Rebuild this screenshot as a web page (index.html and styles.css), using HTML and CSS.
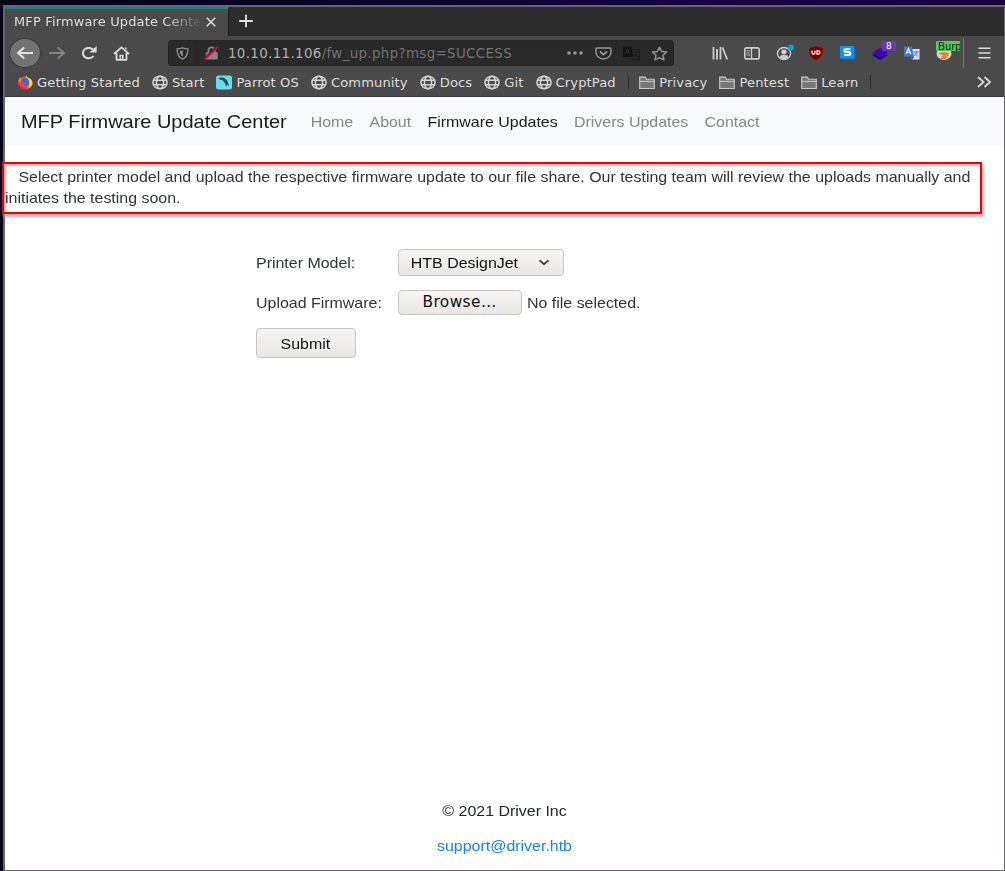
FILE: index.html
```html
<!DOCTYPE html>
<html lang="en">
<head>
<meta charset="utf-8">
<title>MFP Firmware Update Center</title>
<link rel="stylesheet" href="styles.css">
</head>
<body>
<svg class="defs" width="0" height="0">
  <symbol id="globe" viewBox="0 0 16 16"><g fill="none" stroke="#d4d4d4" stroke-width="1.5"><ellipse cx="8" cy="8.500" rx="7.1" ry="6.300"/><ellipse cx="8" cy="8.500" rx="3.600" ry="6.300"/><path d="M1.500 6.300h13M1.500 10.700h13"/></g></symbol>
  <symbol id="folder" viewBox="0 0 16 16"><path d="M.7 14.500V3.100h5.500l1.400 2.200h7.700v9.200z" fill="#777" stroke="#c8c8c8" stroke-width="1.1"/><path d="M1 7.400h14" stroke="#c8c8c8"/></symbol>
</svg>
<div class="window">
  <div class="tabs">
    <div class="tab"><span class="tab-title">MFP Firmware Update Center</span>
      <svg width="10" height="10" viewBox="0 0 10 10"><path d="M.8.8l8.4 8.4M9.2.8L.8 9.2" stroke="#ddd" stroke-width="1.6"/></svg>
    </div>
    <svg class="newtab" width="14" height="14" viewBox="0 0 14 14"><path d="M7 .7v12.6M.3 7h13.4" stroke="#e4e4e4" stroke-width="1.8"/></svg>
  </div>

  <div class="toolbar">
    <div class="cell back"><svg width="18" height="14" viewBox="0 0 18 14"><path d="M17 7H2M8.3 1.4L2 7l6.300 5.600" fill="none" stroke="#e4e4e4" stroke-width="2"/></svg></div>
    <div class="cell"><svg width="18" height="14" viewBox="0 0 18 14"><path d="M1 7h15M9.700 1.400L16 7l-6.300 5.600" fill="none" stroke="#858585" stroke-width="1.800"/></svg></div>
    <div class="cell"><svg width="16" height="14" viewBox="0 0 16 14"><path d="M12.700 4.500A5.800 5.200 0 1 0 12.500 10" fill="none" stroke="#dcdcdc" stroke-width="2"/><path d="M15.600 0v6.600H8.500z" fill="#dcdcdc"/></svg></div>
    <div class="cell"><svg width="17" height="15" viewBox="0 0 17 15"><path d="M1 8l7.500-6.700L16 8M3.500 7v6.800h10V7" fill="none" stroke="#dcdcdc" stroke-width="1.800" stroke-linejoin="round"/><path d="M11.500 1.500h2v3z" fill="#dcdcdc"/><path d="M7.200 13V9.500h2.600V13" fill="none" stroke="#dcdcdc" stroke-width="1.500"/></svg></div>

    <div class="urlbar">
      <div class="ucell shield"><svg width="13" height="13" viewBox="0 0 13 13"><path d="M6.500.8c1.800.8 3.500 1 5.400 1.100 0 5.300-1.100 8.300-5.400 10.300C2.200 10.200 1.100 7.200 1.100 1.900 3 1.800 4.700 1.600 6.500.8z" fill="none" stroke="#8b8b8b" stroke-width="1.400"/><path d="M6.900 3.400v6.200C4.700 8.300 3.900 6.700 3.900 4z" fill="#8b8b8b"/></svg></div>
      <div class="ucell"><svg width="15" height="14" viewBox="0 0 15 14"><path d="M4.500 7V4.300a3.200 3 0 0 1 6.400 0V7" fill="none" stroke="#858585" stroke-width="1.800"/><rect x="1.800" y="6.200" width="12" height="7.300" rx="1" fill="#858585"/><path d="M.5 12.600L13.700.2" stroke="#292929" stroke-width="2"/><path d="M.8 13.200L14 .8" stroke="#e5003f" stroke-width="1.900"/></svg></div>
      <span class="url"><b>10.10.11.106</b>/fw_up.php?msg=SUCCESS</span>
      <div class="ucell"><svg width="16" height="4" viewBox="0 0 16 4" fill="#949494"><ellipse cx="2" cy="2" rx="1.900" ry="1.700"/><ellipse cx="8" cy="2" rx="1.900" ry="1.700"/><ellipse cx="14" cy="2" rx="1.900" ry="1.700"/></svg></div>
      <div class="ucell"><svg width="17" height="13" viewBox="0 0 17 13"><path d="M1 2.300Q1 1 2.200 1h12.600Q16 1 16 2.300v3a7.500 6.700 0 0 1-15 0z" fill="none" stroke="#949494" stroke-width="1.500"/><path d="M5 4.500l3.500 3.100L12 4.500" fill="none" stroke="#949494" stroke-width="1.800"/></svg></div>
      <div class="ucell"><svg width="17" height="15" viewBox="0 0 17 15"><path d="M0 .5h8.500l2 10.500H0z" fill="#151515"/><path d="M9 3.800h7.300v10H8.500" fill="none" stroke="#181818"/><path d="M2.500 8l2-5 2 5M3.300 6.300h2.500" fill="none" stroke="#303030"/><path d="M11 6.500h4M13 5.500c0 3-.7 4-2 5M12 8l3 3" fill="none" stroke="#181818"/></svg></div>
      <div class="ucell"><svg width="17" height="15" viewBox="0 0 17 15"><path d="M8.500 1.300l2.100 4.100 5.100.5-3.700 3.300.9 4.700-4.400-2.300-4.400 2.300.9-4.700L1.300 5.900l5.100-.5z" fill="none" stroke="#949494" stroke-width="1.500" stroke-linejoin="round"/></svg></div>
    </div>

    <div class="cell"><svg width="16" height="13" viewBox="0 0 16 13"><path d="M1.500 0v12.500M5 2v10.500M8.500 0v12.500M10.500.500l4.700 12" fill="none" stroke="#ccc" stroke-width="1.800"/></svg></div>
    <div class="cell"><svg width="16" height="13" viewBox="0 0 16 13"><rect x=".8" y=".9" width="14.400" height="11" rx="2" fill="none" stroke="#ccc" stroke-width="1.600"/><path d="M7.500 1v11" stroke="#ccc" stroke-width="1.300"/><path d="M2.500 3.900h3.700M2.500 6h3.200M2.500 8.100h3.700" stroke="#bbb"/></svg></div>
    <div class="cell"><svg width="20" height="18" viewBox="0 0 20 18"><ellipse cx="10" cy="9.500" rx="6.600" ry="6" fill="none" stroke="#ccc" stroke-width="1.400"/><ellipse cx="10" cy="7.900" rx="2.700" ry="2.400" fill="#ccc"/><path d="M5.500 13.300c1-3.300 8-3.300 9 0-2 2.400-7 2.400-9 0z" fill="#ccc"/><circle cx="17" cy="3.400" r="3" fill="#00a5df"/></svg></div>
    <div class="cell"><svg width="16" height="14" viewBox="0 0 16 14"><path d="M8 0c2 1.200 4 1.600 7 1.700 0 6-1 9.700-7 12.300C2 11.400 1 7.700 1 1.700 4 1.600 6 1.200 8 0z" fill="#800000"/><path d="M4 4.700v2.100q0 1.400 1.500 1.400T7 6.800V4.700M9 4.900v3.200h1q2 0 2-1.600t-2-1.600z" fill="none" stroke="#fff" stroke-width="1.200"/></svg></div>
    <div class="cell"><svg width="16" height="14" viewBox="0 0 16 14"><path d="M2 12h12V2h2v12H2z" fill="#0869ae"/><path d="M0 0h14v12.500H0z" fill="#0a94f5"/><path d="M10.300 3.300H5.700q-1.500 0-1.500 1.300t1.500 1.300h3q1.600 0 1.600 1.500T8.700 8.900H4" fill="none" stroke="#fff" stroke-width="2"/></svg></div>
    <div class="cell"><svg width="18" height="16" viewBox="0 0 18 16"><path d="M1 10l8-4 8 4-8 5z" fill="#25008b"/><path d="M1 7.500L9 3l8 4.500-8 4.700z" fill="#4207af"/></svg><span class="badge">8</span></div>
    <div class="cell"><svg width="16" height="14" viewBox="0 0 16 14"><path d="M6 3h9.500v10.500H8z" fill="#d9e0ec"/><path d="M0 .5h7.700l2.500 10H0z" fill="#4277dc"/><path d="M2.200 8L4.400 2.500 6.700 8M3.100 6.400h2.800" fill="none" stroke="#fff" stroke-width="1.200"/><path d="M9.700 6h5M12.500 5c0 3-1 4-2.500 5M11 7.500l3 3" stroke="#4277dc" fill="none"/><path d="M7 10.500h3l-1.500 3z" fill="#234b9a"/></svg></div>
    <div class="cell burp"><svg width="16" height="15" viewBox="0 0 16 15"><ellipse cx="8" cy="7.500" rx="7.500" ry="6.500" fill="#e3cfb4"/><path d="M2.500 7.500q5-3 11 0l-1.500 1q1 1.500-1 2.500-3 1.500-6-.5l2-1z" fill="#ed822e"/><path d="M5 12.300h5" stroke="#8c6040"/></svg><span class="burp-badge">Burp</span></div>
    <div class="menu"><svg width="13" height="12" viewBox="0 0 13 12"><path d="M.5 1.200h12M.5 6h12M.5 10.800h12" stroke="#dadada" stroke-width="1.600"/></svg></div>
  </div>

  <div class="bookmarks">
    <span class="bm"><svg viewBox="0 0 16 16"><ellipse cx="8.200" cy="9" rx="7.300" ry="6.500" fill="#ff4a2c"/><path d="M8.500 2.500Q9.700.4 10 3.600q6.500 1.300 5.200 7.300-1.300 3-4.500 3.500 2-3 1.500-6T8.500 2.500z" fill="#ffd42c"/><path d="M1.500 7.400l1.200-4.200 2 1.800-1 3z" fill="#ff8a22"/><ellipse cx="8" cy="7.700" rx="4" ry="3.800" fill="#2a6fe0"/><path d="M3.300 8.300l3.500-.3 1.700 1-1.800 1 1 1.500-2 .3z" fill="#f33d45"/><path d="M1 9q2 5.500 8 5.800" fill="none" stroke="#df1c62" stroke-width="1.500"/></svg>Getting Started</span>
    <span class="bm"><svg><use href="#globe"/></svg>Start</span>
    <span class="bm"><svg viewBox="0 0 16 16"><rect y="1.500" width="16" height="14" rx="2.500" fill="#66dfed"/><path d="M2.300 4c5-1.700 8.500.5 9.700 4.600l1 3.700c-.8-.6-1.500-1.500-2-2.300 0 1.500-.3 2.300-.8 3C9.500 9.500 8.500 7.500 6 6L4 5.700z" fill="#294e55"/></svg>Parrot OS</span>
    <span class="bm"><svg><use href="#globe"/></svg>Community</span>
    <span class="bm"><svg><use href="#globe"/></svg>Docs</span>
    <span class="bm"><svg><use href="#globe"/></svg>Git</span>
    <span class="bm"><svg><use href="#globe"/></svg>CryptPad</span>
    <i class="sep"></i>
    <span class="bm"><svg><use href="#folder"/></svg>Privacy</span>
    <span class="bm"><svg><use href="#folder"/></svg>Pentest</span>
    <span class="bm"><svg><use href="#folder"/></svg>Learn</span>
    <i class="sep"></i>
    <svg class="more" width="14" height="12" viewBox="0 0 14 12"><path d="M1 1l5.500 5L1 11M7.500 1L13 6l-5.500 5" fill="none" stroke="#dadada" stroke-width="1.800"/></svg>
  </div>

  <main class="page">
    <nav class="nav"><div class="nav-inner wide">
      <span class="brand">MFP Firmware Update Center</span>
      <a>Home</a><a>About</a><a class="active">Firmware Updates</a><a>Drivers Updates</a><a>Contact</a>
    </div></nav>
    <div class="intro"><p class="wide">Select printer model and upload the respective firmware update to our file share. Our testing team will review the uploads manually and<br>initiates the testing soon.</p></div>
    <form class="form">
      <label class="wide">Printer Model:</label>
      <div><button type="button" class="btn select"><span class="wide mid">HTB DesignJet</span><svg width="12" height="7" viewBox="0 0 12 7"><path d="M1.500 1.300L6 5.200l4.500-3.900" fill="none" stroke="#333" stroke-width="1.700"/></svg></button></div>
      <label class="wide">Upload Firmware:</label>
      <div class="file"><button type="button" class="btn browse">Browse…</button><span class="wide">No file selected.</span></div>
      <div class="submit-row"><button type="button" class="btn submit"><span class="wide mid">Submit</span></button></div>
    </form>
    <footer class="footer wide mid"><p>© 2021 Driver Inc</p><a>support@driver.htb</a></footer>
  </main>
</div>
</body>
</html>
```
FILE: styles.css
```css
* { box-sizing: border-box; }
body {
  margin: 0;
  height: 871px;
  overflow: hidden;
  padding: 5px 0 0 3px;
  background: linear-gradient(90deg, #05031a, #080126 30%, #17004a 75%, #150042) top / 100% 5px no-repeat, #06041a;
  font-family: "Liberation Sans", Arial, sans-serif;
}
.defs { position: absolute; }
svg { display: block; flex: none; }
.window {
  height: 866px;
  border: solid #68666c;
  border-width: 2px 1px 1px 2px;
  display: flex;
  flex-direction: column;
  background: #fff;
}

.tabs, .toolbar, .bookmarks { font-family: "DejaVu Sans", sans-serif; font-size: 13.1px; letter-spacing: .11px; color: #dedede; white-space: nowrap; }
.tabs { height: 29px; flex: none; display: flex; align-items: center; background: #2c2c2c; }
.tab {
  width: 224px; height: 29px; padding: 0 12px 2px 9px;
  display: flex; align-items: center; justify-content: space-between;
  background: #4a4a4a; border-top: 2px solid #0a8580; border-right: 1px solid #1d1d1d;
}
.tab-title {
  width: 188px; overflow: hidden; font-size: 12.9px; letter-spacing: .2px;
  -webkit-mask-image: linear-gradient(90deg, #000 150px, transparent 189px);
  mask-image: linear-gradient(90deg, #000 150px, transparent 189px);
}
.newtab { margin: 0 0 2px 10px; }

.toolbar { height: 34px; flex: none; display: flex; align-items: center; background: #4a4a4a; padding-left: 4px; }
.cell { width: 32px; height: 30px; flex: none; position: relative; display: flex; align-items: center; justify-content: center; }
.back { background: #737373; border: 1px solid #393939; border-radius: 50%; }
.urlbar {
  width: 506px; height: 26px; margin: 0 30px 0 31px;
  display: flex; align-items: center; flex: none;
  background: #292929; border: 1px solid #242424; border-radius: 3px;
}
.ucell { width: 28px; height: 24px; flex: none; display: flex; align-items: center; justify-content: center; }
.shield { border-right: 1px solid #222; }
.url { flex: 1; padding-left: 3px; font-size: 13.4px; letter-spacing: .35px; color: #727272; }
.url b { font-weight: normal; color: #b0b0b0; }
.badge {
  position: absolute; right: 0; top: 3px; width: 14px; height: 10px; border-radius: 1px;
  background: #6a38b5; color: #fff; font-size: 9px; line-height: 10px; text-align: center;
}
.burp-badge {
  position: absolute; left: 8px; top: 3px; width: 24px; height: 10px; overflow: hidden; border-radius: 1px;
  background: #57c95b; color: #082808; font: 10.5px/10px "Liberation Sans", sans-serif; letter-spacing: .3px; padding-left: 2px;
}
.menu { height: 30px; width: 41px; border-left: 1px solid #737373; display: flex; align-items: center; justify-content: center; margin-left: 3px; }

.bookmarks {
  height: 27px; flex: none; display: flex; align-items: center; gap: 12px;
  padding: 0 13px 2px 12px; background: #4a4a4a; border-bottom: 1px solid #3a3a3a;
}
.bm { display: flex; align-items: center; gap: 4px; }
.bm svg { width: 16px; height: 16px; }
.sep { width: 1px; height: 14px; margin-right: -1.5px; background: #2c2c2c; }
.more { margin-left: auto; }

/* Page text is set slightly extended */
.page { flex: 1; display: flex; flex-direction: column; background: #fff; color: #303438; font-size: 15px; line-height: 21px; }
.wide { transform: scaleX(1.063); transform-origin: left center; }
.wide.mid { transform-origin: center; }
.nav { height: 48px; flex: none; display: flex; align-items: center; background: #f8f9fa; padding: 0 0 0 16px; color: #868787; }
.nav-inner { display: flex; align-items: center; gap: 15.3px; white-space: nowrap; }
.brand { font-size: 18.77px; color: #1b1b1b; margin-right: 7.3px; }
.nav .active { color: #1d1d1d; }
.intro {
  width: 980px; height: 52px; margin: 17px 0 0 -3px; flex: none; position: relative;
  border: 2px solid #f20000; padding: 2px 0 0 1px; white-space: nowrap;
  box-shadow: 2px 3px 3px #b0b0b0, inset 2px 2px 3px #b8b8b8;
}
.intro p { margin: 0; width: 900px; text-indent: 12.6px; }
.intro br + * { text-indent: 0; }
.form { width: 500px; margin: 35px 0 0 250.6px; display: grid; grid-template-columns: 142px 1fr; grid-template-rows: 27px 25px 29px; column-gap: 0; row-gap: 14px; align-items: center; }
.form label { justify-self: start; }
.btn {
  display: flex; align-items: center; justify-content: center; padding: 0;
  font: 15px "Liberation Sans", Arial, sans-serif; color: #111;
  background: linear-gradient(#f6f5f4, #e9e7e5); border: 1px solid #cac5c0; border-radius: 4px;
}
.select { width: 166px; height: 27px; gap: 23px; padding-left: 3px; }
.file { display: flex; align-items: center; gap: 5.5px; }
.browse { width: 124px; height: 25px; padding-bottom: 1px; font-family: "DejaVu Sans", sans-serif; font-size: 15.4px; letter-spacing: .4px; }
.submit-row { grid-column: 1 / 3; margin-top: -1px; }
.submit { width: 100px; height: 30px; }
.footer { margin-top: auto; padding-bottom: 14px; text-align: center; color: #212529; }
.footer p { margin: 0 0 14px; }
.footer a { color: #1583f5; }
```
